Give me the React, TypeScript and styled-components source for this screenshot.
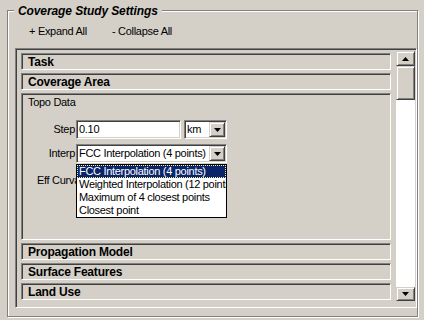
import React from "react";
import styled, { createGlobalStyle } from "styled-components";

const GlobalStyle = createGlobalStyle`
  html, body { margin: 0; padding: 0; background: #d4d0c8; }
  body {
    font-family: "Liberation Sans", Arial, sans-serif;
    font-size: 11px;
    color: #000;
  }
  * { box-sizing: border-box; }
`;

const Screen = styled.div`
  width: 424px;
  height: 320px;
  background: #d4d0c8;
  padding: 10px 0 0 7px;
  overflow: hidden;
`;

const Group = styled.div`
  position: relative;
  width: 411px;
  height: 307px;
  border: 1px solid #808080;
  box-shadow: 1px 1px 0 #fff, inset 1px 1px 0 #fff;
  padding: 14px 0 0 7px;
  display: flex;
  flex-direction: column;
  align-items: flex-start;
`;

const GroupTitle = styled.span`
  position: absolute;
  left: 6px;
  top: -7px;
  padding: 0 4px;
  background: #d4d0c8;
  font-weight: bold;
  font-style: italic;
  font-size: 12px;
  line-height: 14px;
  letter-spacing: -0.1px;
  white-space: nowrap;
`;

const Toolbar = styled.div`
  display: flex;
  height: 13px;
  line-height: 13px;
  padding-left: 14px;
  margin-bottom: 10px;
  letter-spacing: -0.3px;
`;

const ToolLink = styled.span<{ $w?: number }>`
  display: block;
  width: ${(p) => (p.$w ? `${p.$w}px` : "auto")};
  white-space: nowrap;
  cursor: default;
`;

const Panel = styled.div`
  width: 402px;
  height: 260px;
  border: 1px solid;
  border-color: #808080 #fff #fff #808080;
  box-shadow: inset 1px 1px 0 #404040, inset -1px -1px 0 #d4d0c8;
  padding: 1px;
  display: flex;
`;

const Sections = styled.div`
  flex: 1;
  display: flex;
  flex-direction: column;
  gap: 3px;
  padding: 3px 5px 0 4px;
`;

const sunken = `
  border: 1px solid;
  border-color: #808080 #fff #fff #808080;
  box-shadow: inset 1px 1px 0 #404040;
`;

const SectionHeader = styled.div`
  ${sunken}
  height: 17px;
  padding: 1px 0 0 6px;
  font-weight: bold;
  font-size: 12px;
  line-height: 14px;
  letter-spacing: -0.2px;
  white-space: nowrap;
`;

const SectionBody = styled.div`
  ${sunken}
  height: 147px;
  padding: 2px 0 0 6px;
  display: flex;
  flex-direction: column;
  align-items: flex-start;
`;

const BodyTitle = styled.div`
  line-height: 13px;
  letter-spacing: -0.3px;
  margin-bottom: 11px;
`;

const FieldRow = styled.div<{ $top?: number }>`
  display: flex;
  align-items: center;
  margin-left: 9px;
  margin-top: ${(p) => p.$top ?? 0}px;
  gap: 3px;
`;

const Label = styled.span<{ $left?: boolean }>`
  width: 39px;
  margin-right: -3px;
  padding-right: 1px;
  text-align: ${(p) => (p.$left ? "left" : "right")};
  white-space: nowrap;
  letter-spacing: -0.3px;
  line-height: 13px;
`;

const fieldBox = `
  height: 19px;
  border: 1px solid;
  border-color: #808080 #fff #fff #808080;
  box-shadow: inset 1px 1px 0 #404040, inset -1px -1px 0 #d4d0c8;
  background: #fff;
  padding: 1px;
`;

const TextField = styled.div<{ $w: number }>`
  ${fieldBox}
  width: ${(p) => p.$w}px;
  padding-left: 2px;
  line-height: 15px;
  letter-spacing: -0.3px;
  white-space: nowrap;
  overflow: hidden;
`;

const Combo = styled.div<{ $w: number }>`
  ${fieldBox}
  position: relative;
  width: ${(p) => p.$w}px;
  display: flex;
`;

const ComboText = styled.span`
  flex: 1;
  padding-left: 1px;
  line-height: 15px;
  letter-spacing: -0.3px;
  white-space: nowrap;
  overflow: hidden;
`;

const raised = `
  background: #d4d0c8;
  border: 1px solid;
  border-color: #d4d0c8 #404040 #404040 #d4d0c8;
  box-shadow: inset 1px 1px 0 #fff, inset -1px -1px 0 #808080;
`;

const DropButton = styled.span`
  ${raised}
  width: 16px;
  height: 15px;
  display: flex;
  align-items: center;
  justify-content: center;
  flex-shrink: 0;
`;

const DropList = styled.div`
  position: absolute;
  left: -1px;
  top: calc(100% + 2px);
  width: 151px;
  height: 54px;
  background: #fff;
  border: 1px solid #000;
  z-index: 10;
  overflow: hidden;
`;

const ListItem = styled.div<{ $selected?: boolean }>`
  height: 13px;
  line-height: 13px;
  padding-left: 2px;
  white-space: nowrap;
  letter-spacing: -0.3px;
  background: ${(p) => (p.$selected ? "#0a246a" : "transparent")};
  color: ${(p) => (p.$selected ? "#fff" : "#000")};
  outline: ${(p) => (p.$selected ? "1px dotted #f4f0a0" : "none")};
  outline-offset: -1px;
`;

const ScrollBar = styled.div`
  width: 19px;
  margin: 1px 0 5px 0;
  display: flex;
  flex-direction: column;
`;

const ScrollButton = styled.div<{ $h: number }>`
  ${raised}
  height: ${(p) => p.$h}px;
  display: flex;
  align-items: center;
  justify-content: center;
`;

const ScrollThumb = styled.div`
  ${raised}
  height: 34px;
`;

const ScrollTrack = styled.div`
  flex: 1;
  background: #fff;
`;

const Arrow = ({ up }: { up?: boolean }) => (
  <svg width="7" height="4" viewBox="0 0 7 4">
    <polygon points={up ? "3.5,0 7,4 0,4" : "0,0 7,0 3.5,4"} fill="#000" />
  </svg>
);

const interpOptions = [
  "FCC Interpolation (4 points)",
  "Weighted Interpolation (12 points)",
  "Maximum of 4 closest points",
  "Closest point",
];

export default function App() {
  return (
    <>
      <GlobalStyle />
      <Screen>
        <Group>
          <GroupTitle>Coverage Study Settings</GroupTitle>
          <Toolbar>
            <ToolLink $w={83}>+ Expand All</ToolLink>
            <ToolLink>- Collapse All</ToolLink>
          </Toolbar>
          <Panel>
            <Sections>
              <SectionHeader>Task</SectionHeader>
              <SectionHeader>Coverage Area</SectionHeader>
              <SectionBody>
                <BodyTitle>Topo Data</BodyTitle>
                <FieldRow>
                  <Label>Step</Label>
                  <TextField $w={105}>0.10</TextField>
                  <Combo $w={43}>
                    <ComboText>km</ComboText>
                    <DropButton>
                      <Arrow />
                    </DropButton>
                  </Combo>
                </FieldRow>
                <FieldRow $top={5}>
                  <Label>Interp</Label>
                  <Combo $w={151}>
                    <ComboText>{interpOptions[0]}</ComboText>
                    <DropButton>
                      <Arrow />
                    </DropButton>
                    <DropList>
                      {interpOptions.map((o, i) => (
                        <ListItem key={o} $selected={i === 0}>
                          {o}
                        </ListItem>
                      ))}
                    </DropList>
                  </Combo>
                </FieldRow>
                <FieldRow $top={8}>
                  <Label $left>Eff Curvature</Label>
                  <TextField $w={151} />
                </FieldRow>
              </SectionBody>
              <SectionHeader>Propagation Model</SectionHeader>
              <SectionHeader>Surface Features</SectionHeader>
              <SectionHeader>Land Use</SectionHeader>
            </Sections>
            <ScrollBar>
              <ScrollButton $h={15}>
                <Arrow up />
              </ScrollButton>
              <ScrollThumb />
              <ScrollTrack />
              <ScrollButton $h={14}>
                <Arrow />
              </ScrollButton>
            </ScrollBar>
          </Panel>
        </Group>
      </Screen>
    </>
  );
}
